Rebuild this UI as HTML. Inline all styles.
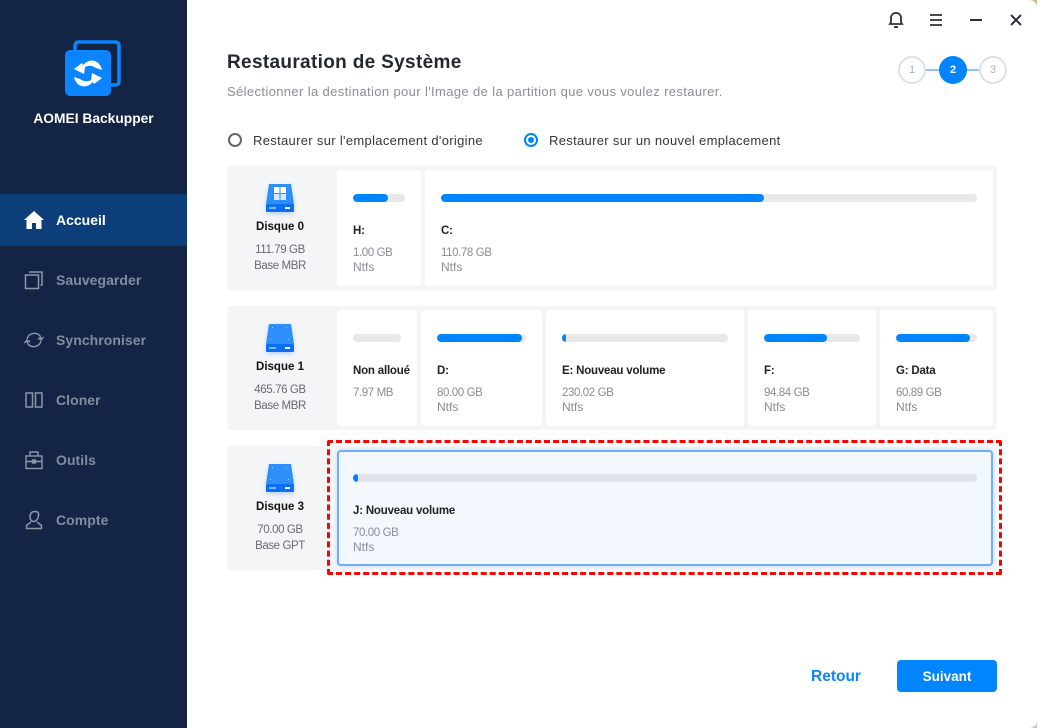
<!DOCTYPE html>
<html><head><meta charset="utf-8">
<style>
html,body{margin:0;padding:0;background:#fff;}
body{width:1037px;height:728px;position:relative;overflow:hidden;font-family:"Liberation Sans","Noto Sans CJK SC",sans-serif;}
.a{position:absolute;}
.t{position:absolute;white-space:nowrap;line-height:16px;}
.nav{font-size:14px;font-weight:bold;color:#818c9f;left:56px;letter-spacing:.05px;}
.c{position:absolute;background:#fff;border-radius:4px;top:4px;height:116px;}
.row{position:absolute;left:227px;width:770px;height:124px;background:#f4f5f7;border-radius:4px;}
.bar{position:absolute;height:8px;border-radius:4px;background:#e8e8e8;overflow:hidden;}
.bar i{display:block;height:8px;background:#0085ff;border-radius:4px;}
.l{font-size:11.500px;font-weight:bold;color:#222;letter-spacing:-.2px;margin-top:1px;}
.s{font-size:11.500px;color:#8b8b95;letter-spacing:-.4px;margin-top:1px;}
.n{font-size:12px;color:#8b8b95;}
.d{font-size:11.500px;color:#666a73;text-align:center;width:110px;letter-spacing:-.4px;margin-top:1px;}
.dn{font-size:11.500px;font-weight:bold;color:#111;text-align:center;width:110px;margin-top:1px;}
.hd{filter:drop-shadow(0 2px 2px rgba(10,111,242,.25));}
</style></head><body>
<div class="a" style="left:0;top:0;width:187px;height:728px;background:#132445;"></div>
<svg class="a" style="left:60px;top:35px" width="66" height="66" viewBox="0 0 66 66">
<path d="M15 15 V11 Q15 7 19 7 H55 Q59 7 59 11 V46 Q59 50 55 50 H51" fill="none" stroke="#0a85ff" stroke-width="3.500"/>
<rect x="5" y="15" width="46" height="46" rx="5" fill="#0a85ff"/>
<path d="M14 34 L22 28 L23 30 Q30 23 37 27 Q41 30 42 35 L36 33 Q30 29 25 32 L24 39 Z" fill="#fff"/>
<path d="M14 34 L22 28 L23 30 Q30 23 37 27 Q41 30 42 35 L36 33 Q30 29 25 32 L24 39 Z" fill="#fff" transform="rotate(180 28 38.500)"/>
</svg>
<div class="t" style="left:0;width:187px;text-align:center;top:111px;font-size:13.800px;font-weight:bold;color:#fff;">AOMEI Backupper</div>
<div class="a" style="left:0;top:194px;width:187px;height:52px;background:#0c3f7a;"></div>
<svg class="a" style="left:24px;top:211px" width="20" height="18" viewBox="0 0 20 18"><path d="M10 0 L20 9 H17.500 V18 H12 V12 H8 V18 H2.500 V9 H0 Z" fill="#fff"/></svg>
<div class="t nav" style="top:212px;color:#fff;letter-spacing:0;">Accueil</div>
<svg class="a" style="left:24px;top:270px" width="20" height="20" viewBox="0 0 20 20" fill="none" stroke="#8c97a8" stroke-width="1.500"><rect x="1.500" y="5" width="13" height="13.500"/><path d="M5 2 H18 V15 H16.500"/></svg>
<div class="t nav" style="top:272px;">Sauvegarder</div>
<svg class="a" style="left:24px;top:330px" width="20" height="20" viewBox="0 0 20 20" fill="none" stroke="#8c97a8" stroke-width="1.400"><path d="M3 9 A7.500 7.500 0 0 1 16 6 L17 9"/><path d="M17 11 A7.500 7.500 0 0 1 4 14 L3 11"/><path d="M14 8 L17 10 L19.500 7"/><path d="M0.500 13 L3 10 L6 12"/></svg>
<div class="t nav" style="top:332px;">Synchroniser</div>
<svg class="a" style="left:24px;top:390px" width="20" height="20" viewBox="0 0 20 20" fill="none" stroke="#8c97a8" stroke-width="1.500"><rect x="2" y="3" width="6.500" height="14"/><rect x="11.500" y="3" width="6.500" height="14"/></svg>
<div class="t nav" style="top:392px;">Cloner</div>
<svg class="a" style="left:24px;top:450px" width="20" height="20" viewBox="0 0 20 20" fill="none" stroke="#8c97a8" stroke-width="1.400"><rect x="2" y="6" width="16" height="12.500"/><path d="M6 6 V2 H14 V6 M2 11.500 H18"/><rect x="8.500" y="10" width="3" height="3" fill="#8c97a8"/></svg>
<div class="t nav" style="top:452px;">Outils</div>
<svg class="a" style="left:24px;top:510px" width="20" height="20" viewBox="0 0 20 20" fill="none" stroke="#8c97a8" stroke-width="1.500"><path d="M6 7 C6 3 8 1.500 11 1.500 C14 1.500 15 3 14.500 6 C14 9 12 11.500 9.500 11.500 C7.500 11.500 6 9.500 6 7 Z"/><path d="M7 12 L2.500 15.500 V18.500 H17.500 V15.500 L13 12"/></svg>
<div class="t nav" style="top:512px;">Compte</div>

<svg class="a" style="left:888px;top:11px" width="16" height="18" viewBox="0 0 16 18" fill="none" stroke="#2a2f38" stroke-width="1.800"><path d="M2 13 C3.500 11 3 9 3 7 C3 4 5 2 8 2 C11 2 13 4 13 7 C13 9 12.500 11 14 13 Z"/><path d="M6 16 H10"/></svg>
<svg class="a" style="left:929px;top:13px" width="14" height="14" viewBox="0 0 14 14" stroke="#2a2f38" stroke-width="1.800"><path d="M1 2 H13 M1 7 H13 M1 12 H13"/></svg>
<div class="a" style="left:970px;top:19px;width:12px;height:2px;background:#2a2f38;"></div>
<svg class="a" style="left:1010px;top:14px" width="12" height="12" viewBox="0 0 12 12" stroke="#2a2f38" stroke-width="2"><path d="M1 1 L11 11 M11 1 L1 11"/></svg>
<div class="a" style="right:0;top:0;width:8px;height:8px;background:radial-gradient(circle at 0 100%,transparent 7.500px,#c8c48a 8.500px);"></div>
<div class="a" style="right:0;bottom:0;width:8px;height:8px;background:radial-gradient(circle at 0 0,transparent 7.500px,#c5c8cf 8.500px);"></div>

<div class="a" style="left:926px;top:69px;width:54px;height:2px;background:#8fc4f5;"></div>
<div class="a" style="left:898px;top:56px;width:24px;height:24px;border:2px solid #dce1e8;border-radius:50%;background:#fff;text-align:center;line-height:24px;font-size:11px;color:#aab2bf;">1</div>
<div class="a" style="left:939px;top:56px;width:28px;height:28px;border-radius:50%;background:#0085ff;text-align:center;line-height:28px;font-size:11px;font-weight:bold;color:#fff;">2</div>
<div class="a" style="left:979px;top:56px;width:24px;height:24px;border:2px solid #dce1e8;border-radius:50%;background:#fff;text-align:center;line-height:24px;font-size:11px;color:#aab2bf;">3</div>

<div class="t" style="left:227px;top:53px;line-height:20px;font-size:19px;font-weight:bold;color:#23272e;letter-spacing:.33px;">Restauration de Système</div>
<div class="t" style="left:227px;top:84px;font-size:13px;color:#8b8e9b;letter-spacing:.37px;">Sélectionner la destination pour l'Image de la partition que vous voulez restaurer.</div>

<div class="a" style="left:228px;top:133px;width:10px;height:10px;border:2px solid #63666e;border-radius:50%;"></div>
<div class="t" style="left:253px;top:133px;font-size:13px;color:#33363c;letter-spacing:.32px;">Restaurer sur l'emplacement d'origine</div>
<div class="a" style="left:524px;top:133px;width:10px;height:10px;border:2px solid #0085ff;border-radius:50%;"></div>
<div class="a" style="left:528px;top:137px;width:6px;height:6px;background:#0085ff;border-radius:50%;"></div>
<div class="t" style="left:549px;top:133px;font-size:13px;color:#33363c;letter-spacing:.32px;">Restaurer sur un nouvel emplacement</div>

<div class="row" style="top:166px;">
<div class="c" style="left:110px;width:84px;"></div><div class="c" style="left:198px;width:568px;"></div></div>
<div class="row" style="top:306px;">
<div class="c" style="left:110px;width:80px;"></div><div class="c" style="left:194px;width:121px;"></div><div class="c" style="left:319px;width:198px;"></div><div class="c" style="left:521px;width:128px;"></div><div class="c" style="left:653px;width:113px;"></div></div>
<div class="row" style="top:446px;"></div>

<svg class="a hd" style="left:262px;top:180px" width="36" height="36" viewBox="0 0 36 36"><path d="M7 4 H29 L32 24 H4 Z" fill="#2e8ffa"/><rect x="4" y="24" width="28" height="8" rx="1" fill="#0a6ff2"/><rect x="12" y="7" width="5.500" height="6" fill="#fff"/><rect x="18.500" y="7" width="5.500" height="6" fill="#fff"/><rect x="12" y="14" width="5.500" height="6" fill="#d5e8ff"/><rect x="18.500" y="14" width="5.500" height="6" fill="#d5e8ff"/><rect x="23" y="27" width="5" height="2" fill="#fff"/><path d="M7 27 h7 v2 h-7z" fill="#7db5fa"/></svg>
<svg class="a hd" style="left:262px;top:320px" width="36" height="36" viewBox="0 0 36 36"><path d="M7 4 H29 L32 24 H4 Z" fill="#2e8ffa"/><rect x="4" y="24" width="28" height="8" rx="1" fill="#0a6ff2"/><rect x="23" y="27" width="5" height="2" fill="#fff"/><path d="M7 27 h7 v2 h-7z" fill="#7db5fa"/><path d="M10 7h1v1h-1zM24 7h1v1h-1zM8 19h1v1h-1zM26 19h1v1h-1z" fill="#a9d0fb"/></svg>
<svg class="a hd" style="left:262px;top:460px" width="36" height="36" viewBox="0 0 36 36"><path d="M7 4 H29 L32 24 H4 Z" fill="#2e8ffa"/><rect x="4" y="24" width="28" height="8" rx="1" fill="#0a6ff2"/><rect x="23" y="27" width="5" height="2" fill="#fff"/><path d="M7 27 h7 v2 h-7z" fill="#7db5fa"/><path d="M10 7h1v1h-1zM24 7h1v1h-1zM8 19h1v1h-1zM26 19h1v1h-1z" fill="#a9d0fb"/></svg>

<div class="t dn" style="left:225px;top:218px;">Disque 0</div>
<div class="t d" style="left:225px;top:241px;">111.79 GB</div>
<div class="t d" style="left:225px;top:257px;">Base MBR</div>
<div class="t dn" style="left:225px;top:358px;">Disque 1</div>
<div class="t d" style="left:225px;top:381px;">465.76 GB</div>
<div class="t d" style="left:225px;top:397px;">Base MBR</div>
<div class="t dn" style="left:225px;top:498px;">Disque 3</div>
<div class="t d" style="left:225px;top:521px;">70.00 GB</div>
<div class="t d" style="left:225px;top:537px;">Base GPT</div>

<div class="bar" style="left:353px;top:194px;width:52px;"><i style="width:35px;"></i></div>
<div class="t l" style="left:353px;top:222px;">H:</div><div class="t s" style="left:353px;top:244px;">1.00 GB</div><div class="t n" style="left:353px;top:259px;">Ntfs</div>
<div class="bar" style="left:441px;top:194px;width:536px;"><i style="width:323px;"></i></div>
<div class="t l" style="left:441px;top:222px;">C:</div><div class="t s" style="left:441px;top:244px;">110.78 GB</div><div class="t n" style="left:441px;top:259px;">Ntfs</div>

<div class="bar" style="left:353px;top:334px;width:48px;"></div>
<div class="t l" style="left:353px;top:362px;">Non alloué</div><div class="t s" style="left:353px;top:384px;">7.97 MB</div>
<div class="bar" style="left:437px;top:334px;width:89px;"><i style="width:85px;"></i></div>
<div class="t l" style="left:437px;top:362px;">D:</div><div class="t s" style="left:437px;top:384px;">80.00 GB</div><div class="t n" style="left:437px;top:399px;">Ntfs</div>
<div class="bar" style="left:562px;top:334px;width:166px;"><i style="width:4px;"></i></div>
<div class="t l" style="left:562px;top:362px;">E: Nouveau volume</div><div class="t s" style="left:562px;top:384px;">230.02 GB</div><div class="t n" style="left:562px;top:399px;">Ntfs</div>
<div class="bar" style="left:764px;top:334px;width:96px;"><i style="width:63px;"></i></div>
<div class="t l" style="left:764px;top:362px;">F:</div><div class="t s" style="left:764px;top:384px;">94.84 GB</div><div class="t n" style="left:764px;top:399px;">Ntfs</div>
<div class="bar" style="left:896px;top:334px;width:81px;"><i style="width:74px;"></i></div>
<div class="t l" style="left:896px;top:362px;">G: Data</div><div class="t s" style="left:896px;top:384px;">60.89 GB</div><div class="t n" style="left:896px;top:399px;">Ntfs</div>

<div class="a" style="left:327px;top:440px;width:669px;height:129px;border:3px dashed #f00;border-radius:2px;"></div>
<div class="a" style="left:337px;top:450px;width:652px;height:112px;background:#f3f8ff;border:2px solid #6eaefc;border-radius:4px;box-shadow:0 0 4px #c6d9f5;"></div>
<div class="bar" style="left:353px;top:474px;width:624px;background:#e0e3eb;"><i style="width:5px;"></i></div>
<div class="t l" style="left:353px;top:502px;">J: Nouveau volume</div><div class="t s" style="left:353px;top:524px;">70.00 GB</div><div class="t n" style="left:353px;top:539px;">Ntfs</div>

<div class="t" style="left:811px;top:669px;font-size:15.500px;font-weight:bold;color:#0a85ff;">Retour</div>
<div class="a" style="left:897px;top:660px;width:100px;height:32px;border-radius:4px;background:#0085ff;color:#fff;font-size:13.500px;font-weight:bold;text-align:center;line-height:33px;">Suivant</div>
</body></html>
